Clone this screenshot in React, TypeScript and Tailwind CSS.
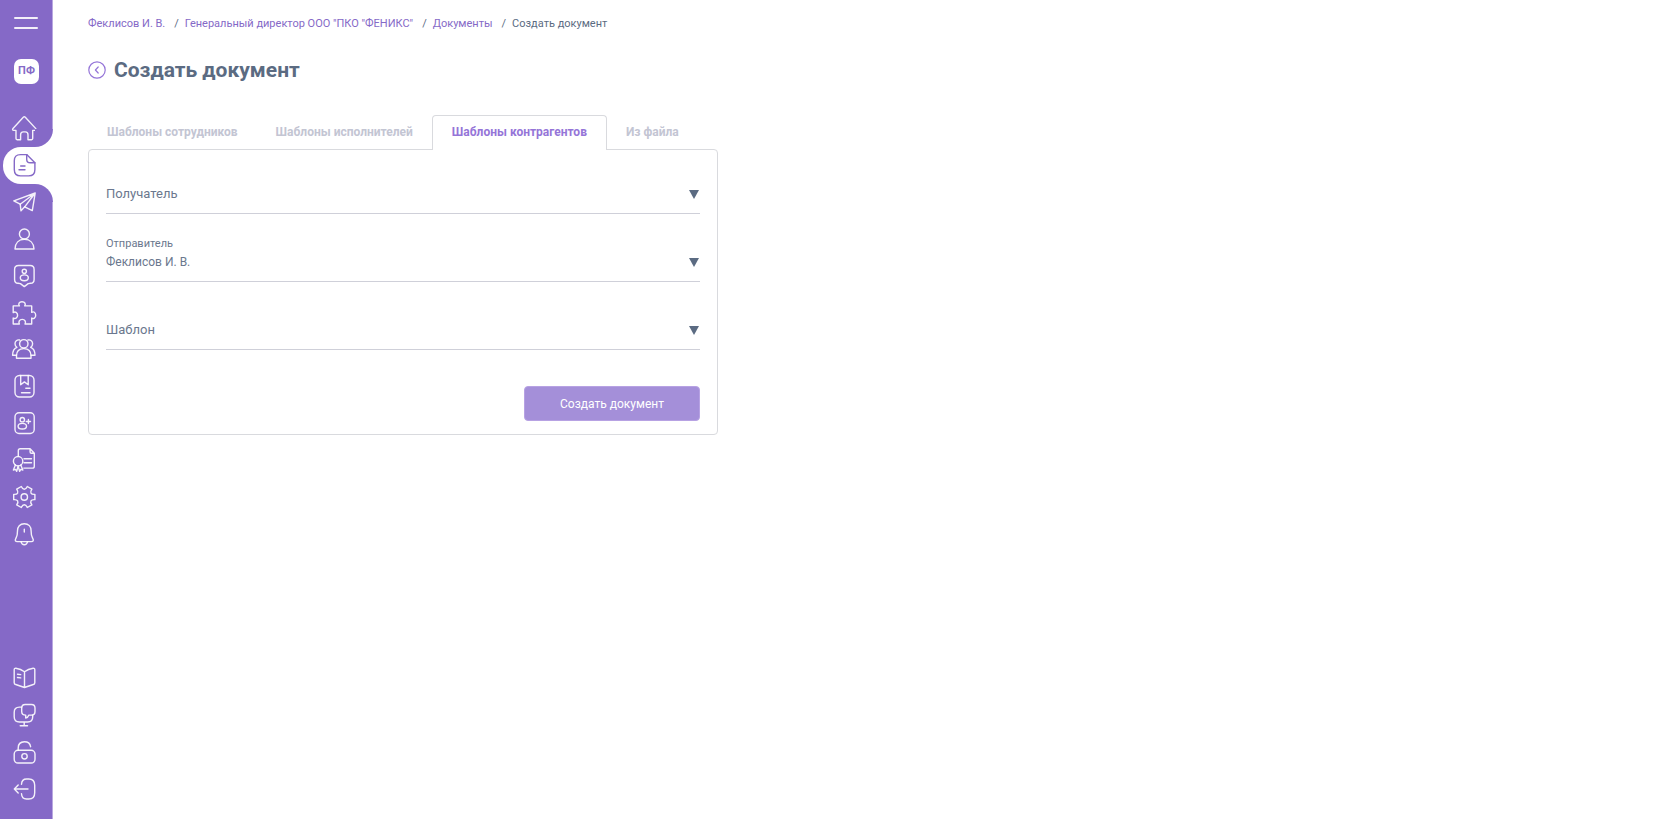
import type { ReactNode } from 'react';
import clsx from 'clsx';

type NavItem = {
  title: string;
  href: string;
  icon: ReactNode;
};

const mainNavItems: NavItem[] = [
  {
    title: 'Главная',
    href: '#home',
    icon: (
      <path d="M11.3 1.3 1 12.4c-.8.9-.4 2 .7 2H4v8.2c0 .7.4 1.1 1.1 1.1h3.5v-5c0-1.7 1.2-2.8 2.7-2.8h2c1.6 0 2.7 1.1 2.7 2.8v5h3.6c.7 0 1.1-.4 1.1-1.1v-8.2h2.2c1.1 0 1.5-1.1.7-2L13.3 1.3c-.6-.6-1.4-.6-2 0Z" />
    ),
  },
  {
    title: 'Документы',
    href: '#documents',
    icon: (
      <>
        <path d="M14.7 1.6H8.5C4.3 1.6 2.3 3.6 2.3 7.8v8.7c0 4.2 2 6.4 6.2 6.4h8.2c4.2 0 6.2-2.2 6.2-6.4V9.8Z" />
        <path d="M14.7 1.6v4.6c0 2.5 1.1 3.6 3.6 3.6h4.6M8.7 13H13M7 16.8h6" />
      </>
    ),
  },
  {
    title: 'Отправленные',
    href: '#sent',
    icon: (
      <>
        <path d="M23.2 3 1.8 10.8l6.4 3.4L23.2 3l-2.9 17.6-7.6-3.8L23.2 3" />
        <path d="m8.2 14.2.8 6.6 3.7-4" />
      </>
    ),
  },
  {
    title: 'Сотрудники',
    href: '#employees',
    icon: (
      <>
        <circle cx="12.4" cy="7" r="5" />
        <path d="M3 22c.2-6 3.8-9.7 9.4-9.7S21.8 16 22 22Z" />
      </>
    ),
  },
  {
    title: 'Исполнители',
    href: '#contractors',
    icon: (
      <>
        <path d="M6.6 1.5h11.6c2.6 0 3.9 1.3 3.9 3.9v10c0 2.4-1.1 3.7-3.5 3.9l-2.4.3-3.9 3-3.9-3-2.4-.3c-2.3-.2-3.4-1.5-3.4-3.9v-10c0-2.6 1.4-3.9 4-3.9Z" />
        <circle cx="12.3" cy="7.3" r="2.1" />
        <ellipse cx="12.3" cy="13.8" rx="4" ry="2.9" />
      </>
    ),
  },
  {
    title: 'Интеграции',
    href: '#integrations',
    icon: (
      <path d="M1.2 4.9h6.2C6 3 7 .7 10 .7s4 2.3 2.7 4.2h7v6.5c1.8-1.3 4 0 4 2.8s-2.2 4.2-4 2.9V23H13c1.2-2 0-4.6-2.8-4.6S6.2 21 7.4 23H1.2v-6c2 1.2 4.4 0 4.4-2.7s-2.4-4-4.4-2.7Z" />
    ),
  },
  {
    title: 'Контрагенты',
    href: '#partners',
    icon: (
      <>
        <circle cx="11.8" cy="6.8" r="4.2" />
        <path d="M4.5 21.3v-2.5c0-4.6 2.9-7.2 7.3-7.2s7.2 2.6 7.2 7.2v2.5Z" />
        <path d="M7.6 3C5 2.4 3 4.2 3 6.7c0 1.6.7 2.9 1.9 3.6C2 11.4.6 14 .6 18.3h3.8M16 3c2.6-.6 4.6 1.2 4.6 3.7 0 1.6-.7 2.9-1.9 3.6 2.9 1.1 4.3 3.7 4.3 8H19.1" />
      </>
    ),
  },
  {
    title: 'Справочники',
    href: '#catalogs',
    icon: (
      <>
        <rect x="3" y="1.5" width="19" height="21.5" rx="4.5" />
        <path d="M8.7 1.5v9.3l3.7-2.9 3.8 2.9V1.5M13.8 14.2h4.2M9.5 18.7H18" />
      </>
    ),
  },
  {
    title: 'Приглашения',
    href: '#invites',
    icon: (
      <>
        <rect x="3" y="1.7" width="19.2" height="20.8" rx="4" />
        <circle cx="10.3" cy="8.7" r="2.2" />
        <ellipse cx="10.3" cy="15.2" rx="4.2" ry="2.8" />
        <path d="M16.4 8.4v4.2M14.3 10.5h4.2" />
      </>
    ),
  },
  {
    title: 'Сертификаты',
    href: '#certificates',
    icon: (
      <>
        <path d="M6.3 8.3V2.7c0-1.3.6-1.9 1.9-1.9h9.9l4.2 4.4v13c0 1.3-.6 1.9-1.9 1.9h-8.6M18.1.8v3.1c0 .9.4 1.3 1.3 1.3h2.9M12 10.8h7.5M12 14.7h7.5" />
        <circle cx="6.1" cy="13.2" r="4.7" />
        <path d="m3.4 17-2 5 2.1-.6 1.2 1.9L6.1 18l1.5 5.3 1.2-1.9 2 .6-2-5" />
      </>
    ),
  },
  {
    title: 'Настройки',
    href: '#settings',
    icon: (
      <g transform="translate(12.3 12)">
        <path d="M-3-10.5Q-1.7-7.7 0-7.7T3-10.5L7.6-7.85Q5.8-5.3 6.67-3.85T10.6-2.65V2.65Q7.5 2.4 6.67 3.85T7.6 7.85L3 10.5Q1.7 7.7 0 7.7T-3 10.5L-7.6 7.85Q-5.8 5.3-6.67 3.85T-10.6 2.65V-2.65Q-7.5-2.4-6.67-3.85T-7.6-7.85Z" />
        <circle r="3.2" />
      </g>
    ),
  },
  {
    title: 'Уведомления',
    href: '#notifications',
    icon: (
      <>
        <path d="M12.3 1.7c-4.4 0-6.8 3-6.8 7 0 3.3-.3 5.1-1.3 7-.8 1.5-1.3 2.2-.8 3.1.3.6.9.8 1.8.8h14.2c.9 0 1.5-.2 1.8-.8.5-.9 0-1.6-.8-3.1-1-1.9-1.3-3.7-1.3-7 0-4-2.4-7-6.8-7Z" />
        <path d="M9 19.6c.5 2.1 1.7 3.1 3.3 3.1s2.8-1 3.3-3.1M12.3 7.2V10" />
      </>
    ),
  },
];

const bottomNavItems: NavItem[] = [
  {
    title: 'Инструкции',
    href: '#manual',
    icon: (
      <>
        <path d="M12.5 5.8C9.9 3.7 7.1 2.6 3.9 2.2c-1.1-.1-1.7.4-1.7 1.5v13c0 1 .5 1.6 1.5 1.8l8.8 3 8.8-3c1-.2 1.5-.8 1.5-1.8v-13c0-1.1-.6-1.6-1.7-1.5-3.2.4-6 1.5-8.6 3.6v15.7" />
        <path d="m5.5 8.2 3.2.4M5.5 11.5l3.2.4" />
      </>
    ),
  },
  {
    title: 'Поддержка',
    href: '#support',
    icon: (
      <>
        <path d="M9.7 4.1H7.4c-3.6 0-5.2 1.8-5.2 5.3v4.4c0 3.5 1.6 5.2 5.2 5.2h8.2c3.5 0 5.1-1.7 5.1-5.2v-1.6M12.2 19v3.7M8.2 22.7h7.3" />
        <path d="M13.2 1.5h6.3c2.4 0 3.5 1.2 3.5 3.6v3.4c0 2.4-1.1 3.6-3.5 3.6h-2.6c-.6 1.7-1.6 2.7-3.2 2.9v-2.9c-2.7 0-4-1.2-4-3.6V5.1c0-2.4 1.1-3.6 3.5-3.6Z" />
      </>
    ),
  },
  {
    title: 'Доступ',
    href: '#access',
    icon: (
      <>
        <rect x="2.2" y="10.3" width="20.8" height="12.7" rx="3.8" />
        <circle cx="12.5" cy="16.3" r="2.7" />
        <path d="M6.2 10.3V8c0-3.7 2.3-6.2 6.2-6.2 3.6 0 5.7 1.8 6.2 4.9" />
      </>
    ),
  },
  {
    title: 'Выход',
    href: '#logout',
    icon: (
      <>
        <path d="M9.5 7.2c.2-3.4 1.7-5.2 5-5.2h2.3c4 0 5.9 2.2 5.9 6.3v7.4c0 4.1-1.9 6.3-5.9 6.3h-2.3c-3.3 0-4.8-1.8-5-5.2" />
        <path d="M16 12H2.3M6.2 8l-3.9 4 3.9 4" />
      </>
    ),
  },
];

const breadcrumbs = [
  { title: 'Феклисов И. В.', href: '#profile' },
  { title: 'Генеральный директор ООО "ПКО "ФЕНИКС"', href: '#company' },
  { title: 'Документы', href: '#documents' },
];

const tabs = [
  'Шаблоны сотрудников',
  'Шаблоны исполнителей',
  'Шаблоны контрагентов',
  'Из файла',
];

function NavLink({ item, isActive }: { item: NavItem; isActive?: boolean }) {
  return (
    <li
      className={clsx(
        'relative flex items-center pl-3',
        isActive && '-mr-px ml-[3px] rounded-l-[18px] bg-white pl-[9px]',
      )}
    >
      {isActive && (
        <>
          {/* Inverse corners above and below the active item */}
          <span className="absolute -top-[18px] right-0 size-[18px] bg-white">
            <span className="block size-full rounded-br-[18px] bg-[#8569c7]" />
          </span>
          <span className="absolute right-0 -bottom-[18px] size-[18px] bg-white">
            <span className="block size-full rounded-tr-[18px] bg-[#8569c7]" />
          </span>
        </>
      )}
      <a
        href={item.href}
        aria-label={item.title}
        className={isActive ? 'text-[#8569c7]' : 'text-white/90'}
      >
        <svg
          viewBox="0 0 24 24"
          className="block size-6 overflow-visible"
          fill="none"
          stroke="currentColor"
          strokeWidth="1.4"
          strokeLinecap="round"
          strokeLinejoin="round"
        >
          {item.icon}
        </svg>
      </a>
    </li>
  );
}

function Sidebar() {
  return (
    <aside className="flex w-[53px] shrink-0 flex-col border-r border-[#b9a8e0] bg-[#8569c7]">
      <button
        type="button"
        aria-label="Меню"
        className="mt-[17px] ml-3.5 flex w-6 flex-col gap-2"
      >
        <span className="h-[2px] w-full rounded-full bg-white/90" />
        <span className="h-[2px] w-full rounded-full bg-white/90" />
      </button>
      <div className="mt-[30px] ml-3.5 flex size-[25px] items-center justify-center rounded-[7px] bg-white text-[11px] font-bold text-[#8569c7]">
        ПФ
      </div>

      <nav className="mt-[26px] flex flex-1 flex-col justify-between pb-3">
        <ul className="grid h-[442px] grid-rows-12">
          {mainNavItems.map((item) => (
            <NavLink
              key={item.href}
              item={item}
              isActive={item.href === '#documents'}
            />
          ))}
        </ul>
        <ul className="grid h-[147px] grid-rows-4">
          {bottomNavItems.map((item) => (
            <NavLink key={item.href} item={item} />
          ))}
        </ul>
      </nav>
    </aside>
  );
}

function SelectField({
  id,
  label,
  value,
}: {
  id: string;
  label: string;
  value?: string;
}) {
  return (
    <div className="relative h-[68px] border-b border-[#cfd0d9] pt-8">
      <label
        htmlFor={id}
        className={clsx(
          'pointer-events-none absolute left-0',
          value
            ? 'top-[22px] text-[11px] leading-4'
            : 'top-[38px] text-[13px] leading-5',
        )}
      >
        {label}
      </label>
      <select
        id={id}
        defaultValue={value}
        className="block h-8 w-full appearance-none bg-transparent text-xs outline-none"
      >
        {value ? <option>{value}</option> : <option value="" />}
      </select>
      <svg
        viewBox="0 0 10 9"
        className="pointer-events-none absolute top-11 right-px h-[9px] w-2.5"
        fill="#5b6b82"
      >
        <path d="M0 0h10L5 9Z" />
      </svg>
    </div>
  );
}

export default function App() {
  return (
    <div className="flex min-h-screen bg-white font-[Roboto,'Liberation_Sans',sans-serif] text-[#6b788e]">
      <Sidebar />

      <main className="min-w-0 flex-1 px-[35px] pt-4">
        {/* Breadcrumbs */}
        <nav className="flex text-[11px] leading-4 text-[#5b6b82]">
          {breadcrumbs.map((item) => (
            <span key={item.href}>
              <a href={item.href} className="text-[#8569c7]">
                {item.title}
              </a>
              <span className="mr-1.5 ml-[9px]">/</span>
            </span>
          ))}
          <span>Создать документ</span>
        </nav>

        <div className="mt-[23px] flex items-center gap-2">
          <a href="#back" aria-label="Назад" className="text-[#9575d8]">
            <svg
              viewBox="0 0 18 18"
              className="block size-[18px]"
              fill="none"
              stroke="currentColor"
              strokeWidth="1.2"
              strokeLinecap="round"
              strokeLinejoin="round"
            >
              <circle cx="9" cy="9" r="8.2" />
              <path d="M10.2 6 7.4 9l2.8 3" />
            </svg>
          </a>
          <h1 className="text-[21px] leading-[30px] font-bold text-[#5b6b82]">
            Создать документ
          </h1>
        </div>

        <div className="mt-[30px] w-full max-w-[630px]">
          {/* Tabs */}
          <div role="tablist" className="flex">
            {tabs.map((tab) => {
              const isActive = tab === 'Шаблоны контрагентов';

              return (
                <button
                  key={tab}
                  type="button"
                  role="tab"
                  aria-selected={isActive}
                  className={clsx(
                    'px-[19px] text-xs font-bold whitespace-nowrap',
                    isActive
                      ? 'relative z-10 -mb-px h-[35px] rounded-t border border-b-0 border-[#d9dade] bg-white pb-0.5 text-[#9575d8]'
                      : 'h-[34px] text-[#c3c5d3]',
                  )}
                >
                  {tab}
                </button>
              );
            })}
          </div>

          {/* Form */}
          <form className="rounded border border-[#d9dade] px-[17px] pb-[13px]">
            <div className="-mt-1">
              <SelectField id="recipient" label="Получатель" />
              <SelectField
                id="sender"
                label="Отправитель"
                value="Феклисов И. В."
              />
              <SelectField id="template" label="Шаблон" />
            </div>
            <div className="mt-9 flex justify-end">
              <button
                type="button"
                className="h-[35px] w-44 rounded border border-[#b7a2e3] bg-[#a48fd9] text-xs text-white"
              >
                Создать документ
              </button>
            </div>
          </form>
        </div>
      </main>
    </div>
  );
}
